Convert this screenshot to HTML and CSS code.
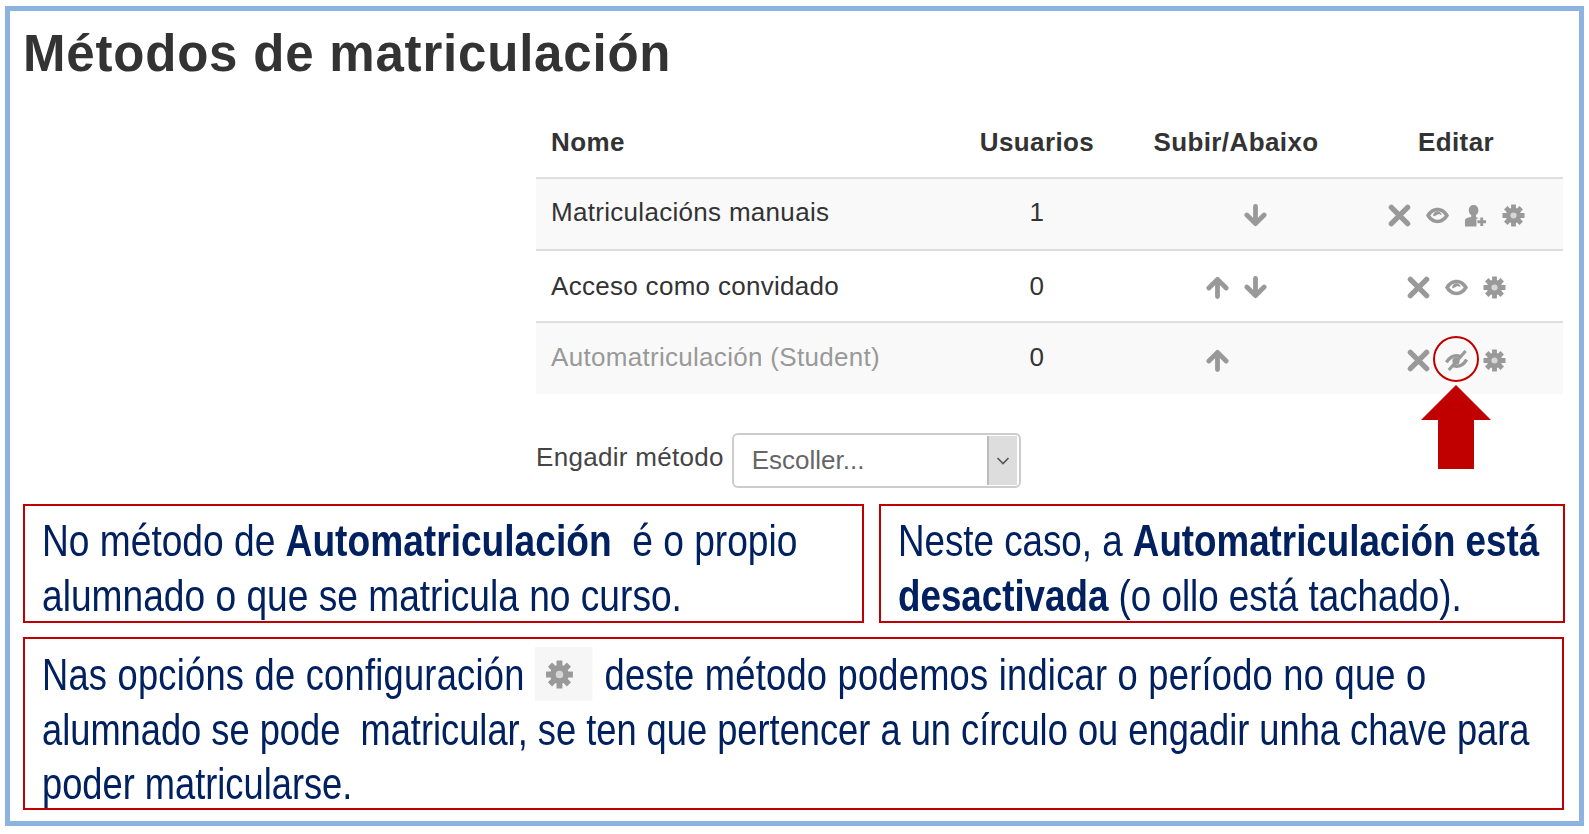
FILE: index.html
```html
<!DOCTYPE html>
<html lang="gl">
<head>
<meta charset="utf-8">
<title>Métodos de matriculación</title>
<link rel="stylesheet" href="styles.css">
</head>
<body>
<svg class="defs" width="0" height="0" aria-hidden="true">
  <defs>
    <symbol id="i-x" viewBox="0 0 24 24"><path d="M3.500 3.500 20.500 20.500M20.500 3.500 3.500 20.500" fill="none" stroke="currentColor" stroke-width="5.500" stroke-linecap="round"/></symbol>
    <symbol id="i-eye" viewBox="0 0 24 24"><path fill-rule="evenodd" d="M0 12C3 6.500 7.500 4 12 4s9 2.500 12 8c-3 5.500-7.500 8-12 8s-9-2.500-12-8Zm4.500 0c1.800 2.800 4.500 4.400 7.500 4.400s5.700-1.600 7.500-4.400c-1.800-2.800-4.500-4.400-7.500-4.400S6.300 9.200 4.500 12Z" fill="currentColor"/><path d="M7.500 12.800a4.500 4.500 0 0 1 9-1.300c-1.500-1-3.500-1.200-4.500-.5-1 .6-2.500 1.800-4.500 1.800Z" fill="currentColor"/></symbol>
    <symbol id="i-eye-off" viewBox="0 0 24 24"><path d="M1.500 14C4 9.500 8 7 12 7c2 0 4 .6 5.500 1.600M22.500 11c-2.500 4.500-6 7-10.500 7-1.500 0-3-.3-4.500-1" fill="none" stroke="currentColor" stroke-width="3.500"/><circle cx="11.500" cy="12.500" r="3.800" fill="currentColor"/><path d="M4 22 21.500 2" fill="none" stroke="currentColor" stroke-width="3.200"/></symbol>
    <symbol id="i-user" viewBox="0 0 24 24"><path d="M10 1c3 0 5 2 5 5.500 0 2.500-1 4-2.500 5v2c1.500.5 2.500 1 3 1.500H13v8.500H1V17c0-2 3-3 6.500-3.500v-2C6 10.500 5 9 5 6.500 5 3 7 1 10 1Z" fill="currentColor"/><path d="M18.500 14v9M14 18.500h9" fill="none" stroke="currentColor" stroke-width="3"/></symbol>
    <symbol id="i-gear" viewBox="0 0 24 24" preserveAspectRatio="none"><circle cx="12" cy="12" r="8" fill="currentColor"/><path d="M12 .5v23M.5 12h23M3.900 3.900 20.100 20.100M20.100 3.900 3.900 20.100" fill="none" stroke="currentColor" stroke-width="5"/><circle cx="12" cy="12" r="3.200" fill="#fff" fill-opacity=".6"/></symbol>
    <symbol id="i-up" viewBox="0 0 24 24"><path d="M12 21.500V4M3 12.500 12 3.500l9 9" fill="none" stroke="currentColor" stroke-width="5" stroke-linecap="round" stroke-linejoin="round"/></symbol>
    <symbol id="i-down" viewBox="0 0 24 24"><path d="M12 2.500V20M3 11.500l9 9 9-9" fill="none" stroke="currentColor" stroke-width="5" stroke-linecap="round" stroke-linejoin="round"/></symbol>
  </defs>
</svg>
<main class="frame">
  <h1 class="title">Métodos de matriculación</h1>

  <table class="methods">
    <thead>
      <tr>
        <th class="col-name">Nome</th>
        <th class="col-users">Usuarios</th>
        <th class="col-move">Subir/Abaixo</th>
        <th class="col-edit">Editar</th>
      </tr>
    </thead>
    <tbody>
      <tr class="striped">
        <td class="col-name">Matriculacións manuais</td>
        <td class="col-users">1</td>
        <td class="col-move"><div class="icons"><span class="icon"></span><svg class="icon"><use href="#i-down"/></svg></div></td>
        <td class="col-edit"><div class="icons"><svg class="icon"><use href="#i-x"/></svg><svg class="icon"><use href="#i-eye"/></svg><svg class="icon"><use href="#i-user"/></svg><svg class="icon"><use href="#i-gear"/></svg></div></td>
      </tr>
      <tr>
        <td class="col-name">Acceso como convidado</td>
        <td class="col-users">0</td>
        <td class="col-move"><div class="icons"><svg class="icon"><use href="#i-up"/></svg><svg class="icon"><use href="#i-down"/></svg></div></td>
        <td class="col-edit"><div class="icons"><svg class="icon"><use href="#i-x"/></svg><svg class="icon"><use href="#i-eye"/></svg><svg class="icon"><use href="#i-gear"/></svg></div></td>
      </tr>
      <tr class="striped disabled">
        <td class="col-name">Automatriculación (Student)</td>
        <td class="col-users">0</td>
        <td class="col-move"><div class="icons"><svg class="icon"><use href="#i-up"/></svg><span class="icon"></span></div></td>
        <td class="col-edit"><div class="icons"><svg class="icon"><use href="#i-x"/></svg><svg class="icon"><use href="#i-eye-off"/></svg><svg class="icon"><use href="#i-gear"/></svg></div></td>
      </tr>
    </tbody>
  </table>

  <div class="add-row">
    <span class="add-label">Engadir método</span>
    <div class="select">
      <span class="select-value">Escoller...</span>
      <span class="select-btn"><svg class="chev" viewBox="0 0 14 8"><path d="M1.500 1 7 6.500 12.500 1" fill="none" stroke="currentColor" stroke-width="1.600"/></svg></span>
    </div>
  </div>

  <div class="note-row">
    <div class="note note-left"><p class="note-text">No método de <b>Automatriculación</b>&nbsp; é o propio<br>alumnado o que se matricula no curso.</p></div>
    <div class="note note-right"><p class="note-text">Neste caso, a <b>Automatriculación está</b><br><b>desactivada</b> (o ollo está tachado).</p></div>
  </div>
  <div class="note note-wide"><p class="note-text"><span class="line-loose">Nas opcións de configuración <span class="chip"><svg class="chip-gear"><use href="#i-gear"/></svg></span> deste método podemos indicar o período no que o</span><br>alumnado se pode&nbsp; matricular, se ten que pertencer a un círculo ou engadir unha chave para<br>poder matricularse.</p></div>

  <svg class="callout" viewBox="0 0 74 140" aria-hidden="true">
    <circle cx="37" cy="24" r="22" fill="none" stroke="#c00000" stroke-width="2"/>
    <path d="M37 50 72 85H55v49H19V85H2Z" fill="#c00000"/>
  </svg>
</main>
</body>
</html>
```
FILE: styles.css
```css
* { box-sizing: border-box; }
html, body { margin: 0; padding: 0; background: #fff; overflow: hidden; }
.defs { position: absolute; }

.frame {
  position: relative;
  width: 1579px;
  height: 820px;
  margin: 6px 0 0 5px;
  padding: 0 15px 0 13px;
  border: 5px solid #8db3e2;
  font-family: "Liberation Sans", Arial, sans-serif;
  color: #333;
}

.title {
  margin: 15px 0 26px;
  font-size: 51px;
  line-height: 56px;
  letter-spacing: .8px;
  font-weight: 700;
  color: #333;
}

.methods {
  width: 1027px;
  margin-left: 513px;
  border-collapse: collapse;
  table-layout: fixed;
  font-size: 26px;
  letter-spacing: .3px;
}
.methods th, .methods td { padding: 0; vertical-align: middle; }
.methods th { height: 70px; font-weight: 700; border-bottom: 2px solid #ddd; letter-spacing: .4px; }
.methods td { height: 72px; border-bottom: 2px solid #ddd; }
.methods tbody tr:last-child td { border-bottom: 0; }
.striped { background: #f9f9f9; }
.striped .col-name, .striped .col-users { padding-bottom: 3px; }
.disabled .col-name { color: #999; }

.col-name { width: 429px; padding-left: 15px !important; text-align: left; }
.col-users { width: 144px; text-align: center; }
.col-move { width: 254px; text-align: center; }
.col-edit { padding-right: 14px !important; text-align: center; }

.icons { display: flex; justify-content: center; gap: 15px; padding-top: 3px; }
.icon { width: 23px; height: 23px; color: #999; filter: blur(.4px); }

.add-row { display: flex; align-items: center; gap: 8px; height: 55px; margin: 39px 0 16px 513px; }
.add-label { font-size: 26px; letter-spacing: .3px; color: #444; padding-bottom: 6px; }
.select {
  display: flex;
  align-items: center;
  justify-content: space-between;
  width: 289px;
  height: 55px;
  padding: 1px 2px 1px 18px;
  border: 2px solid #ccc;
  border-radius: 6px;
  background: #fff;
}
.select-value { font-size: 26px; color: #666; }
.select-btn {
  display: flex;
  align-items: center;
  justify-content: center;
  width: 30px;
  height: 100%;
  background: #ddd;
  border-left: 2px solid #bbb;
  color: #555;
}
.chev { width: 14px; height: 8px; }

.note-row { display: flex; gap: 15px; }
.note {
  --squeeze: .844;
  padding: 8px 0 0 17px;
  border: 2px solid #c00000;
  color: #002060;
}
.note-text {
  width: calc(100% / var(--squeeze));
  margin: 0;
  font-size: 44px;
  line-height: 54.5px;
  white-space: nowrap;
  transform: scaleX(var(--squeeze));
  transform-origin: left top;
}
.note-left { width: 841px; height: 119px; }
.note-right { --squeeze: .835; width: 686px; height: 119px; }
.note-wide { --squeeze: .824; width: 1541px; height: 173px; margin-top: 14px; padding-top: 9px; }
.line-loose { letter-spacing: .3px; }

.chip {
  display: inline-flex;
  align-items: center;
  justify-content: center;
  width: 70px;
  height: 54px;
  margin: -1px 2px 0 0;
  padding-right: 10px;
  vertical-align: top;
  background: #f6f6f6;
}
.chip-gear { width: 34px; height: 29px; color: #999; filter: blur(.4px); }

.callout {
  position: absolute;
  left: 1409px;
  top: 324px;
  width: 74px;
  height: 140px;
}
```
